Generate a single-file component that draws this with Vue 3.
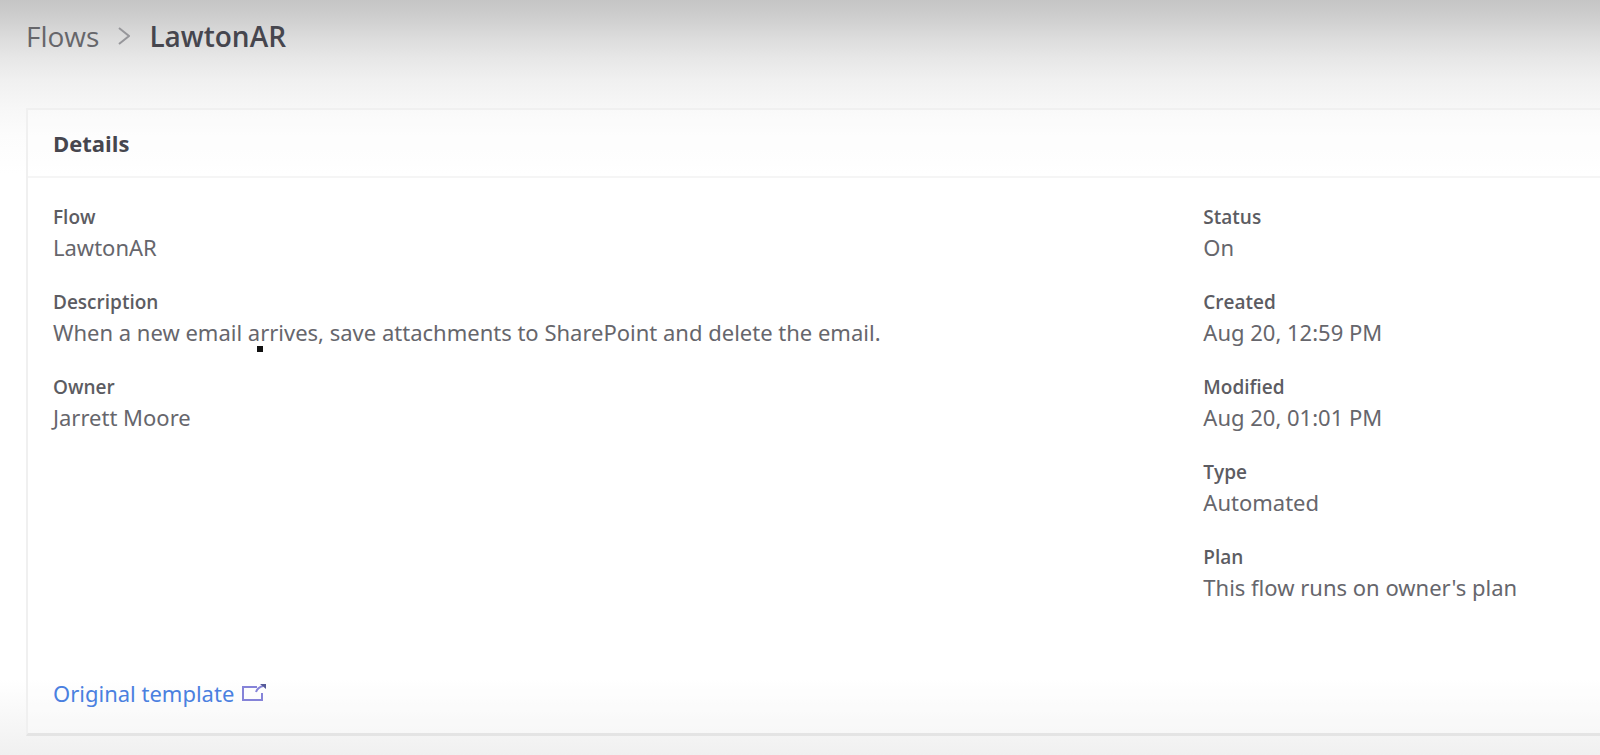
<template>
  <div class="page">
    <nav class="breadcrumb" aria-label="Breadcrumb">
      <a href="#">Flows</a>
      <svg class="chevron" viewBox="0 0 12 20" aria-hidden="true">
        <path d="M1 2l10 8-10 8" />
      </svg>
      <h1>LawtonAR</h1>
    </nav>

    <section class="card">
      <h2>Details</h2>

      <div class="card-body">
        <div class="columns">
          <dl v-for="(column, i) in columns" :key="i">
            <div v-for="item in column" :key="item.label" class="field">
              <dt>{{ item.label }}</dt>
              <dd>
                {{ item.value }}
                <span v-if="item.marker" class="marker"></span>
              </dd>
            </div>
          </dl>
        </div>

        <a class="template-link" href="#">
          Original template
          <svg viewBox="0 0 24 18" aria-hidden="true">
            <path d="M15 3H1v13h19V9" />
            <path d="M14 8c1-3 3-5 7-6" />
            <path class="arrow" d="M18 0h6v5z" />
          </svg>
        </a>
      </div>
    </section>
  </div>
</template>

<script setup>
const columns = [
  [
    { label: "Flow", value: "LawtonAR" },
    {
      label: "Description",
      value:
        "When a new email arrives, save attachments to SharePoint and delete the email.",
      marker: true,
    },
    { label: "Owner", value: "Jarrett Moore" },
  ],
  [
    { label: "Status", value: "On" },
    { label: "Created", value: "Aug 20, 12:59 PM" },
    { label: "Modified", value: "Aug 20, 01:01 PM" },
    { label: "Type", value: "Automated" },
    { label: "Plan", value: "This flow runs on owner's plan" },
  ],
];
</script>

<style>
body {
  background: #ffffff;
}
</style>

<style scoped>
.page {
  box-sizing: border-box;
  min-height: 100vh;
  padding: 15px 0 18px 26px;
  font-family: "Open Sans", "Noto Sans", sans-serif;
  color: #66666c;
  background:
    linear-gradient(
        #c5c5c5 0,
        #d0d0d0 20px,
        #dcdcdc 38px,
        #e7e7e7 58px,
        #f0f0f0 80px,
        #f7f7f7 108px,
        #fcfcfc 136px,
        #ffffff 175px
      )
      top / 100% 175px no-repeat,
    linear-gradient(#ffffff, #f5f5f5 50px, #f0f0f0 75px) bottom / 100% 75px
      no-repeat;
}
.breadcrumb {
  display: flex;
  align-items: center;
  height: 42px;
  margin-bottom: 51px;
  font-size: 28px;
  line-height: 42px;
}
.breadcrumb a {
  color: #66666a;
  text-decoration: none;
}
.chevron {
  width: 12px;
  height: 20px;
  margin: 0 19px;
  fill: none;
  stroke: #96969a;
  stroke-width: 2;
}
h1 {
  margin: 0;
  font-size: 28px;
  font-weight: 600;
  color: #46464e;
}
.card {
  border: 2px solid #f0f0f0;
  border-right: none;
  border-bottom: 3px solid #e4e4e4;
  background: rgba(255, 255, 255, 0.3);
}
h2 {
  margin: 0;
  padding: 18px 25px;
  font-size: 22px;
  line-height: 30px;
  font-weight: 700;
  color: #46464e;
  border-bottom: 2px solid #f5f5f5;
}
.card-body {
  padding: 25px 0 25px 25px;
}
.columns {
  display: grid;
  grid-template-columns: 29fr 10fr;
  margin-bottom: 76px;
}
dl {
  display: flex;
  flex-direction: column;
  gap: 26px;
  margin: 0;
}
dt {
  font-size: 19px;
  line-height: 29px;
  font-weight: 600;
  color: #5c5c62;
}
dd {
  position: relative;
  margin: 0;
  font-family: "Noto Sans", "Open Sans", sans-serif;
  font-size: 22px;
  line-height: 30px;
}
.marker {
  position: absolute;
  left: 204px;
  top: 29px;
  width: 6px;
  height: 6px;
  background: #111111;
}
.template-link {
  display: inline-flex;
  align-items: center;
  gap: 8px;
  font-family: "Noto Sans", "Open Sans", sans-serif;
  font-size: 22px;
  line-height: 30px;
  color: #4a80e0;
  text-decoration: none;
}
.template-link svg {
  width: 24px;
  height: 18px;
  fill: none;
  stroke: #8583d8;
  stroke-width: 2;
}
.template-link .arrow {
  fill: #555a98;
  stroke: none;
}
</style>
